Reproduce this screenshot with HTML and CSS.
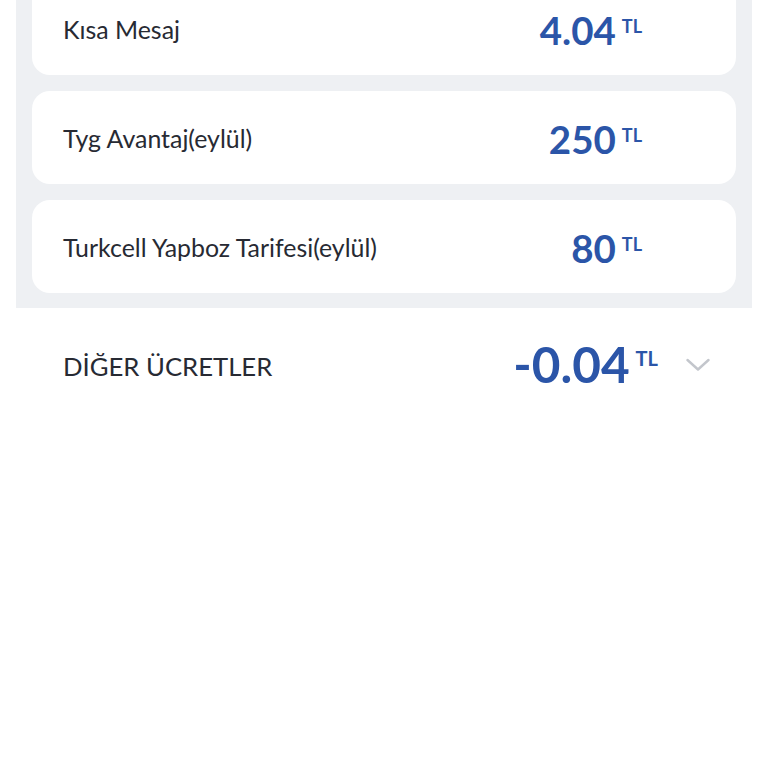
FILE: index.html
```html
<!DOCTYPE html>
<html lang="tr">
<head>
  <meta charset="UTF-8">
  <meta name="viewport" content="width=device-width, initial-scale=1.0">
  <title>Fatura Detayı</title>
  <link rel="stylesheet" href="styles.css">
</head>
<body>
  <section class="panel">
    <div class="card">
      <span class="label">Kısa Mesaj</span>
      <span class="amount">4.04<sup>TL</sup></span>
    </div>
    <div class="card">
      <span class="label">Tyg Avantaj(eylül)</span>
      <span class="amount">250<sup>TL</sup></span>
    </div>
    <div class="card">
      <span class="label">Turkcell Yapboz Tarifesi(eylül)</span>
      <span class="amount">80<sup>TL</sup></span>
    </div>
  </section>

  <div class="group-row">
    <span class="group-title">DİĞER ÜCRETLER</span>
    <span class="group-amount">-0.04<sup>TL</sup></span>
    <svg class="chevron" width="24" height="16" viewBox="0 0 24 16">
      <path d="M1.5 3 L12 12.5 L22.5 3" fill="none" stroke="#c3c6cc" stroke-width="2.4" stroke-linecap="round" stroke-linejoin="round"/>
    </svg>
  </div>
</body>
</html>
```

FILE: styles.css
```css
body {
  margin: 0;
  font-family: Lato, "Noto Sans", sans-serif;
  background-color: #ffffff;
  color: #272a33;
}

.panel {
  margin: -34px 16px 0 16px;
  padding: 16px 16px 15px 16px;
  background-color: #eef0f3;
  display: flex;
  flex-direction: column;
  gap: 16px;
}

.card {
  height: 93px;
  padding: 0 94px 0 31px;
  background-color: #ffffff;
  border-radius: 18px;
  display: flex;
  align-items: center;
  justify-content: space-between;
}

.label {
  font-size: 24.9px;
}

.amount,
.group-amount {
  font-weight: 700;
  color: #2b55a8;
  display: flex;
  align-items: flex-start;
  line-height: 1;
  padding-top: 4px;
}

.amount {
  font-size: 38.5px;
}

.amount sup,
.group-amount sup {
  font-size: 18px;
  vertical-align: baseline;
  margin-left: 6px;
  margin-top: 6px;
}

.group-row {
  display: flex;
  align-items: center;
  padding: 32px 58px 0 63px;
}

.group-title {
  font-size: 25.7px;
  flex: 1;
  padding-top: 2px;
}

.group-amount {
  font-size: 49.5px;
  padding-top: 0;
}

.group-amount sup {
  font-size: 20px;
  margin-top: 8px;
}

.chevron {
  margin-left: 28px;
}
```
